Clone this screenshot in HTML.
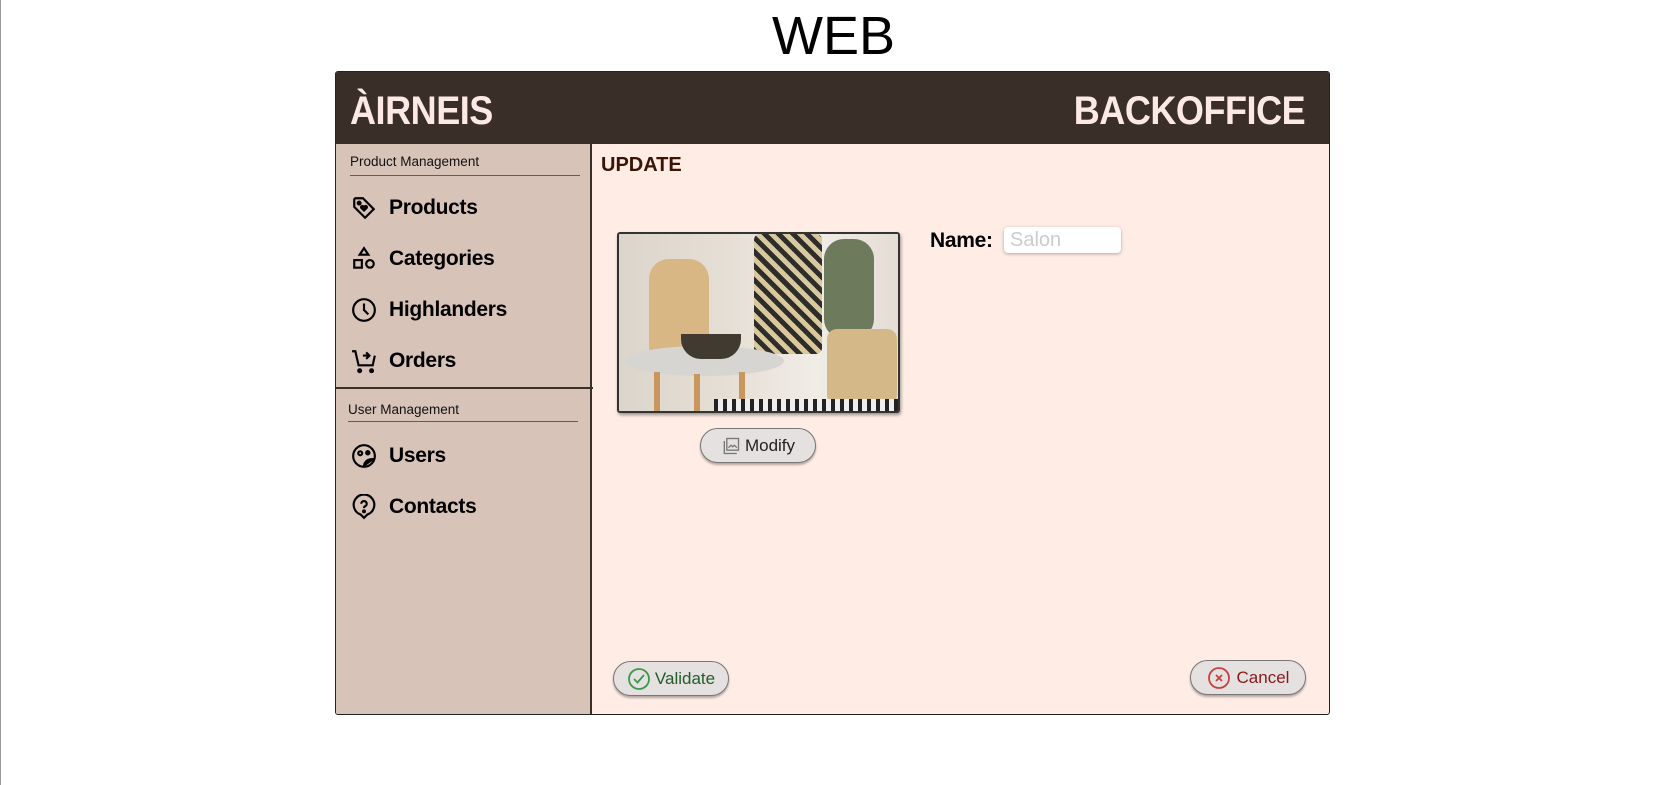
<!DOCTYPE html>
<html><head><meta charset="utf-8"><style>
*{margin:0;padding:0;box-sizing:border-box}
body{width:1665px;height:785px;background:#fff;position:relative;overflow:hidden;font-family:"Liberation Sans",sans-serif;border-left:1px solid #999}
.abs{position:absolute}
.web{left:0;width:1665px;top:5px;text-align:center;font-size:54px;color:#000;line-height:62px}
.frame{left:334px;top:71px;width:995px;height:644px;border:1px solid #222;border-radius:3px;background:#ffece5;overflow:hidden}
.hdr{left:0;top:0;width:100%;height:72px;background:#3a2e29}
.logo{font-weight:bold;color:#fde9e3;font-size:40px;top:17px;letter-spacing:-0.5px;transform:scaleX(0.9)}
.side{left:0;top:72px;width:256px;height:572px;background:#d8c3b9;border-right:2px solid #3a2e29}
.sec{font-size:13.5px;color:#111;left:14px}
.ln{left:14px;width:230px;height:1px;background:#6b5a52}
.item{left:15px;font-size:21px;font-weight:bold;color:#000;display:flex;align-items:center;height:30px;letter-spacing:-0.3px}
.item svg{width:26px;height:26px;margin-right:12px}
.btn{border:1.5px solid #777;border-radius:18px;background:#e4e1e0;box-shadow:0 2px 2px rgba(0,0,0,.3);display:flex;align-items:center;justify-content:center;font-size:17px;height:35px}
</style></head><body>
<div class="abs web">WEB</div>
<div class="abs frame">
 <div class="abs hdr">
  <div class="abs logo" style="left:14px;transform-origin:left">ÀIRNEIS</div>
  <div class="abs logo" style="right:24px;transform-origin:right">BACKOFFICE</div>
 </div>
 <div class="abs side">
  <div class="abs sec" style="top:10px">Product Management</div>
  <div class="abs ln" style="top:31px"></div>
  <div class="abs item" style="top:49px"><svg viewBox="0 0 24 24" fill="none" stroke="#000" stroke-width="2"><path d="M3 4v7l10 10 8-8L11 3H4z"/><circle cx="7.5" cy="7.5" r="1.3" fill="#000"/><path d="M12 15l-3-3a1.6 1.6 0 0 1 3-1.5 1.6 1.6 0 0 1 3 1.5z" fill="#000" stroke-width="1"/></svg>Products</div>
  <div class="abs item" style="top:100px"><svg viewBox="0 0 24 24" fill="none" stroke="#000" stroke-width="2"><path d="M12 2l4 6H8z"/><rect x="3" y="13" width="7" height="7"/><circle cx="17.5" cy="16.5" r="3.5"/></svg>Categories</div>
  <div class="abs item" style="top:151px"><svg viewBox="0 0 24 24" fill="none" stroke="#000" stroke-width="2"><circle cx="12" cy="12" r="10"/><path d="M12 6v6l4 4"/></svg>Highlanders</div>
  <div class="abs item" style="top:202px"><svg viewBox="0 0 24 24" fill="none" stroke="#000" stroke-width="2"><path d="M1 3h3l3 13h13l2-9"/><path d="M11 7h6M14 4l3 3-3 3"/><circle cx="8" cy="21" r="1.3" fill="#000"/><circle cx="19" cy="21" r="1.3" fill="#000"/></svg>Orders</div>
  <div class="abs" style="left:0;top:243px;width:257px;height:2px;background:#3a2e29"></div>
  <div class="abs sec" style="top:258px;left:12px">User Management</div>
  <div class="abs ln" style="top:277px;left:12px"></div>
  <div class="abs item" style="top:297px"><svg viewBox="0 0 24 24" fill="none" stroke="#000" stroke-width="2"><circle cx="12" cy="12" r="10"/><circle cx="8.5" cy="9.5" r="1.8"/><circle cx="15.5" cy="9" r="1.5" fill="#000"/><path d="M12 22c0-5 4-8 10-7" fill="#000"/></svg>Users</div>
  <div class="abs item" style="top:348px"><svg viewBox="0 0 24 24" fill="none" stroke="#000" stroke-width="2"><path d="M12 22l-3-3A9.5 9.5 0 1 1 15 19z"/><path d="M9.5 9a2.5 2.5 0 1 1 3.5 2.3c-.8.4-1 1-1 1.7"/><circle cx="12" cy="16" r=".8" fill="#000"/></svg>Contacts</div>
 </div>
 <div class="abs" style="left:265px;top:82px;font-size:20px;font-weight:bold;color:#3a1505">UPDATE</div>
 <div class="abs" style="left:281px;top:160px;width:283px;height:181px;border:2px solid #333;border-radius:3px;box-shadow:1px 2px 3px rgba(0,0,0,.4);overflow:hidden;background:#e6dfd6">
  <div class="abs" style="left:0;top:0;width:100%;height:100%;background:linear-gradient(90deg,#dcd5cb 0%,#e6dfd6 40%,#f0ece6 70%,#e4ddd5 100%)"></div>
  <div class="abs" style="left:30px;top:25px;width:60px;height:105px;background:#d8b784;border-radius:20px 20px 6px 6px"></div>
  <div class="abs" style="left:135px;top:0;width:68px;height:120px;background:repeating-linear-gradient(45deg,#2d2d2a 0 5px,#d9c79d 5px 10px);border-radius:6px"></div>
  <div class="abs" style="left:205px;top:5px;width:50px;height:100px;background:#6d7a5c;border-radius:20px"></div>
  <div class="abs" style="left:208px;top:95px;width:70px;height:85px;background:#d4b887;border-radius:10px 10px 20px 20px"></div>
  <div class="abs" style="left:5px;top:112px;width:160px;height:30px;background:#d7d5d1;border-radius:50%"></div>
  <div class="abs" style="left:62px;top:100px;width:60px;height:25px;background:#403a30;border-radius:0 0 20px 20px"></div>
  <div class="abs" style="left:35px;top:138px;width:6px;height:45px;background:#c9965e"></div>
  <div class="abs" style="left:75px;top:140px;width:6px;height:45px;background:#c9965e"></div>
  <div class="abs" style="left:120px;top:138px;width:6px;height:45px;background:#c9965e"></div>
  <div class="abs" style="left:95px;top:165px;width:190px;height:16px;background:repeating-linear-gradient(90deg,#222 0 4px,#eee 4px 9px)"></div>
 </div>
 <div class="abs btn" style="left:364px;top:356px;width:116px;color:#222"><svg width="20" height="20" viewBox="0 0 24 24" fill="none" stroke="#777" stroke-width="1.6" style="margin-right:4px"><rect x="7" y="3" width="14" height="14"/><path d="M4 6v15h15"/><path d="M9 14l3-3 2 2 2-2 3 3"/></svg>Modify</div>
 <div class="abs" style="left:594px;top:157px;font-size:21px;font-weight:bold;color:#000;letter-spacing:-0.3px">Name:</div>
 <div class="abs" style="left:668px;top:155px;width:117px;height:26px;background:#fff;border-radius:4px;box-shadow:0 1px 3px rgba(0,0,0,.3);color:#ccc;font-size:20px;padding-left:6px;line-height:26px">Salon</div>
 <div class="abs btn" style="left:277px;top:589px;width:116px;color:#225c2a"><svg width="24" height="24" viewBox="0 0 24 24" fill="none" stroke="#3a9a4a" stroke-width="1.8" style="margin-right:4px"><circle cx="12" cy="12" r="10"/><path d="M7 12l3.5 3.5L17 8"/></svg>Validate</div>
 <div class="abs btn" style="left:854px;top:588px;width:116px;color:#8a1a1a"><svg width="24" height="24" viewBox="0 0 24 24" fill="none" stroke="#c94040" stroke-width="1.8" style="margin-right:6px"><circle cx="12" cy="12" r="10"/><path d="M9 9l6 6M15 9l-6 6"/></svg>Cancel</div>
</div>
</body></html>
